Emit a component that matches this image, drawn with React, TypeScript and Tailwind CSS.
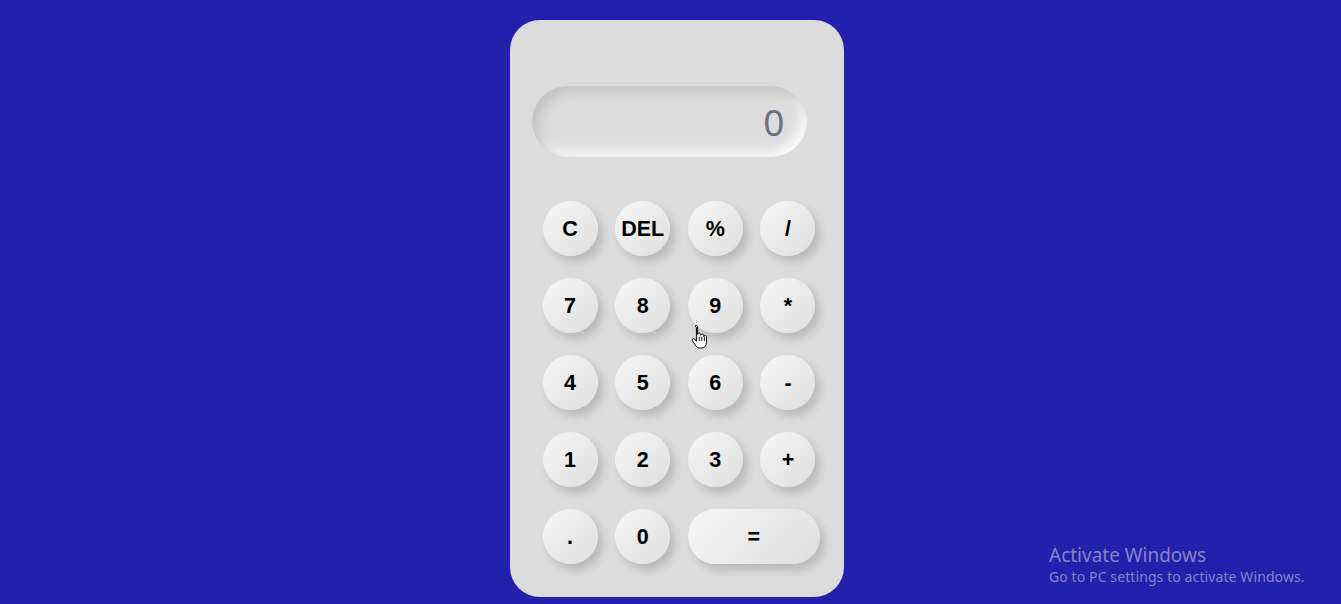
import React from 'react';

const keys: { label: string; wide?: boolean }[] = [
  { label: 'C' }, { label: 'DEL' }, { label: '%' }, { label: '/' },
  { label: '7' }, { label: '8' }, { label: '9' }, { label: '*' },
  { label: '4' }, { label: '5' }, { label: '6' }, { label: '-' },
  { label: '1' }, { label: '2' }, { label: '3' }, { label: '+' },
  { label: '.' }, { label: '0' }, { label: '=', wide: true },
];

const Key: React.FC<{ label: string; wide?: boolean }> = ({ label, wide }) => (
  <button
    className={`h-[55px] ${wide ? 'w-[132px] col-span-2' : 'w-[55px]'} rounded-full bg-[linear-gradient(135deg,#f7f7f7,#dedede)] shadow-[5px_6px_9px_rgba(0,0,0,0.16)] text-[21.5px] font-bold text-black flex items-center justify-center pt-[1px]`}
  >
    {label}
  </button>
);

// pointer cursor sitting over the keypad
const HandCursor = () => (
  <svg width="18" height="25" viewBox="0 0 18 25" className="absolute left-[691px] top-[324px]">
    <path
      d="M5 1.5c1 0 1.6.7 1.6 1.7v7.3c.2-1 .9-1.4 1.6-1.4.9 0 1.5.6 1.5 1.6v.6c.2-.8.8-1.2 1.5-1.2.9 0 1.5.6 1.5 1.6v.8c.2-.7.8-1 1.4-1 .9 0 1.4.6 1.4 1.6v5.4c0 2.9-1.8 5.5-4.6 5.5H8.6c-1.6 0-2.6-.7-3.5-1.9L1.6 17c-.6-.9-.4-1.8.3-2.2.7-.4 1.5-.2 2 .5l1.5 2V3.2C3.4 2.2 4 1.5 5 1.5z"
      fill="#fff"
      stroke="#000"
      strokeWidth="1"
      strokeLinejoin="round"
    />
    <path d="M8.2 12.5v4.5M10.8 12.5v4.5M13.4 12.5v4.5" stroke="#000" strokeWidth="0.9" />
  </svg>
);

export default function App() {
  return (
    <div className="relative w-full h-[604px] bg-[#2420ae] overflow-hidden font-['Liberation_Sans',Arial,sans-serif]">
      <div className="flex justify-center pt-[20px] pl-[12px]">
        <div className="w-[334px] h-[577px] bg-[#dcdcdc] rounded-[30px] pt-[66px]">
          <div className="ml-[22px] w-[275px] h-[71px] rounded-full bg-[#dcdcdc] shadow-[inset_7px_7px_10px_#c6c6c6,inset_-7px_-7px_10px_#f6f6f6] flex items-center justify-end pr-[22px]">
            <span className="text-[37px] text-[#6c6f86] font-['Noto_Sans',sans-serif] leading-none">0</span>
          </div>
          <div className="mt-[44px] ml-[33px] grid grid-cols-[repeat(4,55px)] gap-x-[17.67px] gap-y-[22px]">
            {keys.map(k => (
              <Key key={k.label} label={k.label} wide={k.wide} />
            ))}
          </div>
        </div>
      </div>

      <HandCursor />

      <div className="absolute left-[1049px] top-[543px] text-[#8585c4] font-['Noto_Sans',sans-serif]">
        <div className="text-[19px] leading-[24px]">Activate Windows</div>
        <div className="text-[14px] leading-[20px] tracking-[0.1px]">Go to PC settings to activate Windows.</div>
      </div>
    </div>
  );
}
